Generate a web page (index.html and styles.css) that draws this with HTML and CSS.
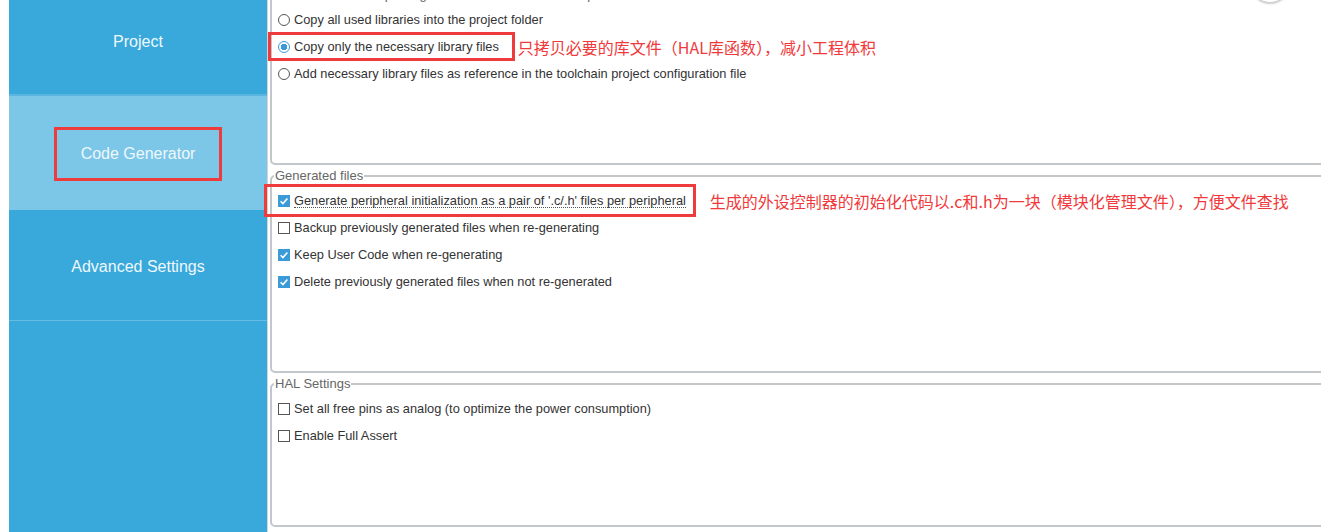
FILE: index.html
```html
<!DOCTYPE html>
<html lang="zh-CN">
<head>
    <meta charset="UTF-8">
    <meta name="viewport" content="width=device-width, initial-scale=1.0">
    <title>Project Manager - Code Generator</title>
    <link rel="stylesheet" href="styles.css">
</head>
<body>
    <div class="window">
        <nav class="sidebar">
            <div class="tab tab-first">Project</div>
            <div class="tab active"><span class="tab-mark">Code Generator</span></div>
            <div class="tab tab-last">Advanced Settings</div>
        </nav>

        <main class="content">
            <fieldset class="group">
                <legend>STM32Cube MCU packages and embedded software packs</legend>
                <div class="option"><span class="radio"></span>Copy all used libraries into the project folder</div>
                <div class="option">
                    <span class="mark mark-radio"><span class="radio checked"></span>Copy only the necessary library files</span>
                    <span class="note note-radio">只拷贝必要的库文件（HAL库函数），减小工程体积</span>
                </div>
                <div class="option"><span class="radio"></span>Add necessary library files as reference in the toolchain project configuration file</div>
            </fieldset>

            <fieldset class="group">
                <legend>Generated files</legend>
                <div class="option">
                    <span class="mark mark-check"><span class="check checked"></span><span class="focused">Generate peripheral initialization as a pair of '.c/.h' files per peripheral</span></span>
                    <span class="note note-check">生成的外设控制器的初始化代码以.c和.h为一块（模块化管理文件），方便文件查找</span>
                </div>
                <div class="option"><span class="check"></span>Backup previously generated files when re-generating</div>
                <div class="option"><span class="check checked"></span>Keep User Code when re-generating</div>
                <div class="option"><span class="check checked"></span>Delete previously generated files when not re-generated</div>
            </fieldset>

            <fieldset class="group">
                <legend>HAL Settings</legend>
                <div class="option"><span class="check"></span>Set all free pins as analog (to optimize the power consumption)</div>
                <div class="option"><span class="check"></span>Enable Full Assert</div>
            </fieldset>
        </main>

        <div class="corner-button"></div>
    </div>
</body>
</html>
```

FILE: styles.css
```css
* {
    box-sizing: border-box;
}

html, body {
    margin: 0;
    height: 100%;
    overflow: hidden;
    background: #fff;
}

.window {
    position: relative;
    display: flex;
    height: 532px;
    padding-left: 9px;
    font-family: 'Liberation Sans', Arial, sans-serif;
}

/* left navigation */
.sidebar {
    width: 258px;
    flex-shrink: 0;
    margin-top: -13px;
    background: #39a8db;
    display: flex;
    flex-direction: column;
}

.tab {
    height: 112px;
    flex-shrink: 0;
    padding-top: 2px;
    display: flex;
    align-items: center;
    justify-content: center;
    color: #eef8fd;
    font-size: 16px;
    border-bottom: 1px solid #66bbe3;
}

.tab-first {
    height: 109px;
    border-bottom: 2px solid #5ab5e0;
}

.tab.active {
    height: 114px;
    background: #7cc6e8;
    border-bottom: none;
}

.tab-last {
    height: 111px;
    padding-top: 4px;
}

.tab-mark {
    padding: 15px 24px;
    border: 3px solid #ee3b3b;
}

/* settings groups */
.content {
    flex: 1;
    margin-top: -12px;
    margin-right: -12px;
    padding-left: 2px;
    border-left: 1px solid #d4d4d4;
}

.group {
    margin: 0 0 4px;
    padding: 4px 0 76px 6px;
    border: 2px solid #c4c7ca;
    border-radius: 5px;
    min-width: 0;
}

.group legend {
    margin-left: -4px;
    padding: 0 1px;
    font-size: 13px;
    line-height: 14px;
    color: #666;
}

.option {
    height: 27px;
    display: flex;
    align-items: center;
    font-size: 12.8px;
    color: #333;
    white-space: nowrap;
}

.radio,
.check {
    width: 12px;
    height: 12px;
    margin-right: 4px;
    flex-shrink: 0;
    background: #fff;
    border: 1px solid #555;
}

.radio {
    border-radius: 50%;
}

.radio.checked {
    border-color: #3d9ad6;
    background: radial-gradient(circle, #3d9ad6 0 3px, #fff 3.5px);
}

.check.checked {
    border: none;
    background: #3b9bd8 url("data:image/svg+xml,%3Csvg xmlns='http://www.w3.org/2000/svg' viewBox='0 0 12 12'%3E%3Cpath d='M2.6 6.2l2.3 2.3 4.5-5' fill='none' stroke='%23fff' stroke-width='1.6'/%3E%3C/svg%3E") center / 12px 12px no-repeat;
}

.focused {
    line-height: 13px;
    border-bottom: 1px dotted #555;
}

/* red annotations */
.mark {
    position: relative;
    align-self: stretch;
    display: flex;
    align-items: center;
}

.mark::after {
    content: "";
    position: absolute;
    border: 3px solid #ee3b3b;
}

.mark-radio::after {
    top: -1px;
    bottom: -1px;
    left: -10px;
    right: -16px;
}

.mark-check::after {
    top: -3px;
    bottom: -3px;
    left: -14px;
    right: -10px;
}

.note {
    font-family: 'Noto Sans CJK SC', sans-serif;
    font-size: 16px;
    color: #f0393b;
}

.note-radio {
    margin-left: 19px;
}

.note-check {
    margin-left: 24px;
}

.corner-button {
    position: absolute;
    top: -37px;
    right: 31px;
    width: 40px;
    height: 40px;
    border-radius: 50%;
    background: #fff;
    border: 1px solid #c9cdd1;
    box-shadow: 0 1px 2px rgba(0, 0, 0, 0.2);
}
```
